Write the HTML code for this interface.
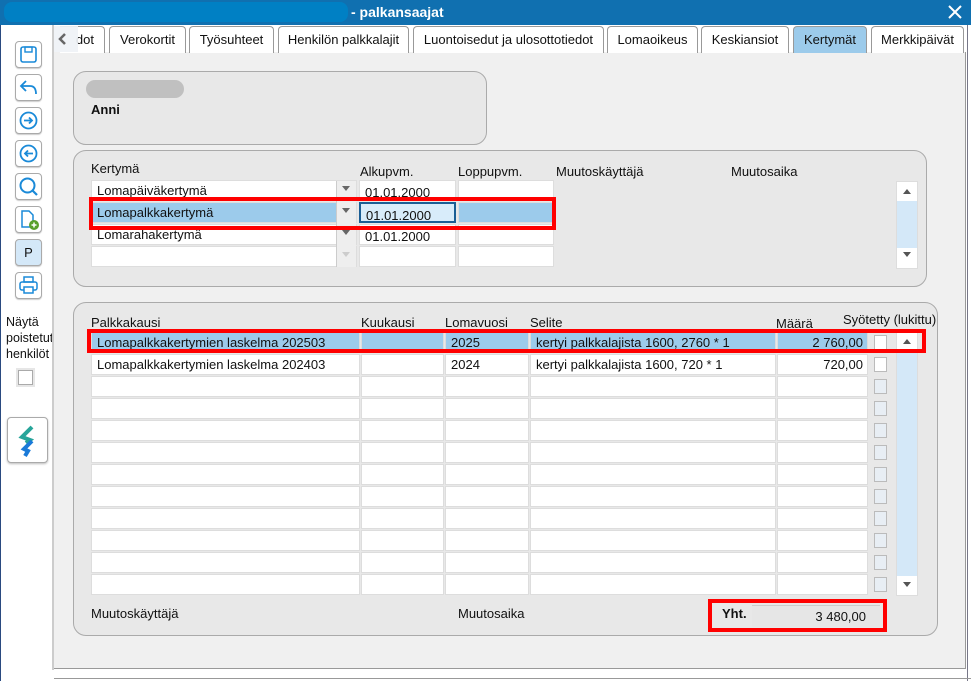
<!DOCTYPE html>
<html><head><meta charset="utf-8"><style>
*{box-sizing:border-box;margin:0;padding:0}
body{width:971px;height:681px;overflow:hidden;background:#fff;font-family:"Liberation Sans",Arial,sans-serif;font-size:13px;color:#111;position:relative}
.a{position:absolute}
.title{left:0;top:0;width:971px;height:25px;background:#1070b0}
.pill{left:4px;top:2px;width:344px;height:20px;border-radius:8px;background:#0080c4}
.tab{position:absolute;top:26px;height:27px;border:1px solid #999;border-bottom:none;border-radius:4px 4px 0 0;background:#fff;text-align:center;line-height:25px;font-size:13px}
.btn{position:absolute;left:15px;width:27px;height:27px;border:1px solid #aaa;border-radius:4px;background:#fff;box-shadow:0 1px 1px #ccc}
.panel{position:absolute;background:#e8e8e8;border:1px solid #aaa;border-radius:13px}
.cell{position:absolute;background:#fff;border:1px solid #ddd;height:21px;line-height:20px;padding-left:5px;white-space:nowrap;overflow:hidden;font-size:13px}
.sel{background:#9ccbeb}
.red{position:absolute;border:4px solid #f00}
.hd{position:absolute;font-size:13px}
.cb{position:absolute;width:13px;height:15px;border:1px solid #bbb;background:#e8eef4}
</style></head><body>
<div class="a title"></div><div class="a pill"></div>
<div class="a" style="left:351px;top:4px;color:#fff;font-weight:bold;font-size:14px">- palkansaajat</div>
<svg class="a" style="left:948px;top:5px" width="14" height="14"><path d="M1 1L13 13M13 1L1 13" stroke="#fff" stroke-width="2"/></svg>
<div class="a" style="left:0;top:25px;width:1px;height:656px;background:#2a4a80"></div>
<div class="a" style="left:52px;top:25px;width:2px;height:645px;background:#ccc"></div>
<div class="a" style="left:54px;top:52px;width:912px;height:617px;background:#f0f0f0;border-right:1px solid #999;border-bottom:1px solid #999"></div>
<div class="tab" style="left:60px;width:45px;border-left:none;border-radius:0 4px 0 0;text-align:right;padding-right:10px">dot</div>
<div class="a" style="left:54px;top:26px;width:24px;height:26px;background:#eef2f6;opacity:.9"></div>
<svg class="a" style="left:58px;top:33px" width="10" height="12"><path d="M7 1L2 6L7 11" stroke="#666" stroke-width="2.5" fill="none"/></svg>
<div class="tab" style="left:109px;width:77px">Verokortit</div>
<div class="tab" style="left:189px;width:85px">Työsuhteet</div>
<div class="tab" style="left:278px;width:131px">Henkilön palkkalajit</div>
<div class="tab" style="left:413px;width:191px">Luontoisedut ja ulosottotiedot</div>
<div class="tab" style="left:607px;width:91px">Lomaoikeus</div>
<div class="tab" style="left:701px;width:88px">Keskiansiot</div>
<div class="tab" style="left:793px;width:74px;background:#9ccbeb">Kertymät</div>
<div class="tab" style="left:871px;width:93px">Merkkipäivät</div>
<div class="a" style="left:967px;top:25px;width:4px;height:656px;background:#fff;border-left:1px solid #778"></div>
<div class="btn" style="top:41px"><svg width="25" height="25"><rect x="5" y="5" width="15" height="15" rx="2" fill="none" stroke="#1a8ad8" stroke-width="1.6"/><rect x="9" y="5" width="7" height="5" fill="none" stroke="#1a8ad8" stroke-width="1.4"/></svg></div>
<div class="btn" style="top:74px"><svg width="25" height="25"><path d="M10 6L5 11L10 16M5 11H14Q20 11 20 19" fill="none" stroke="#1a8ad8" stroke-width="1.8"/></svg></div>
<div class="btn" style="top:107px"><svg width="25" height="25"><circle cx="12.5" cy="12.5" r="8" fill="none" stroke="#1a8ad8" stroke-width="1.8"/><path d="M8 12.5H16M13 9.5L16 12.5L13 15.5" fill="none" stroke="#1a8ad8" stroke-width="1.8"/></svg></div>
<div class="btn" style="top:140px"><svg width="25" height="25"><circle cx="12.5" cy="12.5" r="8" fill="none" stroke="#1a8ad8" stroke-width="1.8"/><path d="M9 12.5H17M12 9.5L9 12.5L12 15.5" fill="none" stroke="#1a8ad8" stroke-width="1.8"/></svg></div>
<div class="btn" style="top:173px"><svg width="25" height="25"><circle cx="11.5" cy="11.5" r="7" fill="none" stroke="#1a8ad8" stroke-width="2"/><path d="M16 16L21 21" stroke="#1a8ad8" stroke-width="2.2"/></svg></div>
<div class="btn" style="top:206px"><svg width="25" height="25"><path d="M6 4H13L17 8V20H6Z" fill="none" stroke="#1a8ad8" stroke-width="1.5"/><circle cx="18" cy="18" r="5" fill="#5aa02c"/><path d="M15.5 18H20.5M18 15.5V20.5" stroke="#fff" stroke-width="1.5"/></svg></div>
<div class="btn" style="top:239px;background:#d4e8f8;text-align:center;line-height:25px;font-size:13px">P</div>
<div class="btn" style="top:272px"><svg width="25" height="25"><rect x="8" y="4" width="9" height="5" fill="none" stroke="#1a8ad8" stroke-width="1.5"/><rect x="4" y="9" width="17" height="8" rx="2" fill="none" stroke="#1a8ad8" stroke-width="1.5"/><rect x="8" y="14" width="9" height="6" fill="#fff" stroke="#1a8ad8" stroke-width="1.5"/></svg></div>
<div class="a" style="left:6px;top:314px;font-size:12.5px;line-height:16px;width:46px;overflow:hidden;white-space:nowrap">Näytä<br>poistetut<br>henkilöt</div>
<div class="a" style="left:16px;top:368px;width:19px;height:19px;background:#e6e6e6"><div style="margin:2px;width:15px;height:15px;border:1px solid #aaa;background:#fff"></div></div>
<div class="a" style="left:7px;top:417px;width:41px;height:46px;border:1px solid #aaa;border-radius:4px;background:#fff;box-shadow:0 1px 2px #bbb"><svg width="41" height="46"><path d="M24 9L14 19L22 22L18 25" stroke="#27a59a" stroke-width="4" fill="none"/><path d="M24 23L16 31L20 33L17 38" stroke="#1a7ad8" stroke-width="4" fill="none"/></svg></div>
<div class="panel" style="left:73px;top:71px;width:414px;height:74px"></div>
<div class="a" style="left:86px;top:80px;width:98px;height:18px;border-radius:9px;background:#c0c0c0"></div>
<div class="a" style="left:91px;top:102px;font-weight:bold">Anni</div>
<div class="panel" style="left:73px;top:150px;width:854px;height:137px"></div>
<div class="hd" style="left:91px;top:161px">Kertymä</div>
<div class="hd" style="left:360px;top:164px">Alkupvm.</div>
<div class="hd" style="left:458px;top:164px">Loppupvm.</div>
<div class="hd" style="left:556px;top:164px">Muutoskäyttäjä</div>
<div class="hd" style="left:731px;top:164px">Muutosaika</div>
<div class="cell" style="left:91px;top:180px;width:266px">Lomapäiväkertymä</div>
<div class="cell" style="left:91px;top:202px;width:266px;background:#9ccbeb">Lomapalkkakertymä</div>
<div class="cell" style="left:91px;top:224px;width:266px">Lomarahakertymä</div>
<div class="cell" style="left:91px;top:246px;width:266px"></div>
<div class="a" style="left:336px;top:181px;width:20px;height:86px;background:#eee;border-left:1px solid #ccc"></div>
<svg class="a" style="left:341px;top:186px" width="10" height="80"><path d="M1 0H9L5 5Z M1 22H9L5 27Z M1 44H9L5 49Z" fill="#666"/><path d="M1 66H9L5 71Z" fill="#ccc"/></svg>
<div class="cell" style="left:359px;top:180px;width:97px;padding-top:2px">01.01.2000</div>
<div class="cell" style="left:359px;top:202px;width:97px;padding-top:2px;background:#d8ecfa;border:2px solid #1a5e95">01.01.2000</div>
<div class="cell" style="left:359px;top:224px;width:97px;padding-top:2px">01.01.2000</div>
<div class="cell" style="left:359px;top:246px;width:97px"></div>
<div class="cell" style="left:458px;top:180px;width:96px"></div>
<div class="cell" style="left:458px;top:202px;width:96px;background:#9ccbeb"></div>
<div class="cell" style="left:458px;top:224px;width:96px"></div>
<div class="cell" style="left:458px;top:246px;width:96px"></div>
<div class="a" style="left:896px;top:181px;width:22px;height:88px;background:#d4e8f8;border:1px solid #ddd"></div>
<div class="a" style="left:897px;top:182px;width:20px;height:19px;background:#fff"></div>
<div class="a" style="left:897px;top:248px;width:20px;height:20px;background:#fff"></div>
<svg class="a" style="left:902px;top:188px" width="10" height="72"><path d="M1 6H9L5 1Z M1 64H9L5 69Z" fill="#555"/></svg>
<div class="red" style="left:89px;top:197px;width:467px;height:33px"></div>
<div class="panel" style="left:73px;top:302px;width:865px;height:334px"></div>
<div class="hd" style="left:91px;top:315px">Palkkakausi</div>
<div class="hd" style="left:361px;top:315px">Kuukausi</div>
<div class="hd" style="left:445px;top:315px">Lomavuosi</div>
<div class="hd" style="left:530px;top:315px">Selite</div>
<div class="hd" style="left:776px;top:316px">Määrä</div>
<div class="hd" style="left:843px;top:312px">Syötetty (lukittu)</div>
<div id="rows"></div>
<script>
var h='',y=332;
for(var i=0;i<12;i++){
 var s=i==0?' sel':'';
 var t=[['Lomapalkkakertymien laskelma 202503','','2025','kertyi palkkalajista 1600, 2760 * 1','2 760,00'],['Lomapalkkakertymien laskelma 202403','','2024','kertyi palkkalajista 1600, 720 * 1','720,00']][i]||['','','','',''];
 h+='<div class="cell'+s+'" style="left:91px;top:'+y+'px;width:269px">'+t[0]+'</div>';
 h+='<div class="cell'+s+'" style="left:361px;top:'+y+'px;width:83px">'+t[1]+'</div>';
 h+='<div class="cell'+s+'" style="left:445px;top:'+y+'px;width:84px">'+t[2]+'</div>';
 h+='<div class="cell'+s+'" style="left:530px;top:'+y+'px;width:246px">'+t[3]+'</div>';
 h+='<div class="cell'+s+'" style="left:777px;top:'+y+'px;width:91px;text-align:right;padding-right:4px">'+t[4]+'</div>';
 h+='<div class="cb" style="left:874px;top:'+(y+3)+'px;'+(i<2?'background:#fff':'')+'"></div>';
 y+=22;}
document.getElementById('rows').innerHTML=h;
</script>
<div class="a" style="left:896px;top:332px;width:22px;height:264px;background:#d4e8f8;border:1px solid #ddd"></div>
<div class="a" style="left:897px;top:333px;width:20px;height:18px;background:#fff"></div>
<div class="a" style="left:897px;top:576px;width:20px;height:19px;background:#fff"></div>
<svg class="a" style="left:902px;top:338px" width="10" height="252"><path d="M1 6H9L5 1Z M1 244H9L5 249Z" fill="#555"/></svg>
<div class="red" style="left:87px;top:329px;width:839px;height:24px"></div>
<div class="hd" style="left:91px;top:606px">Muutoskäyttäjä</div>
<div class="hd" style="left:458px;top:606px">Muutosaika</div>
<div class="a" style="left:752px;top:605px;width:128px;height:22px;background:#e6e6e6;border-top:1px solid #ccc;text-align:right;padding-right:14px;line-height:22px">3 480,00</div>
<div class="hd" style="left:722px;top:606px;font-weight:bold">Yht.</div>
<div class="red" style="left:708px;top:599px;width:179px;height:33px"></div>
<div class="a" style="left:54px;top:678px;width:917px;height:3px;border-top:1px solid #999"></div>
</body></html>
